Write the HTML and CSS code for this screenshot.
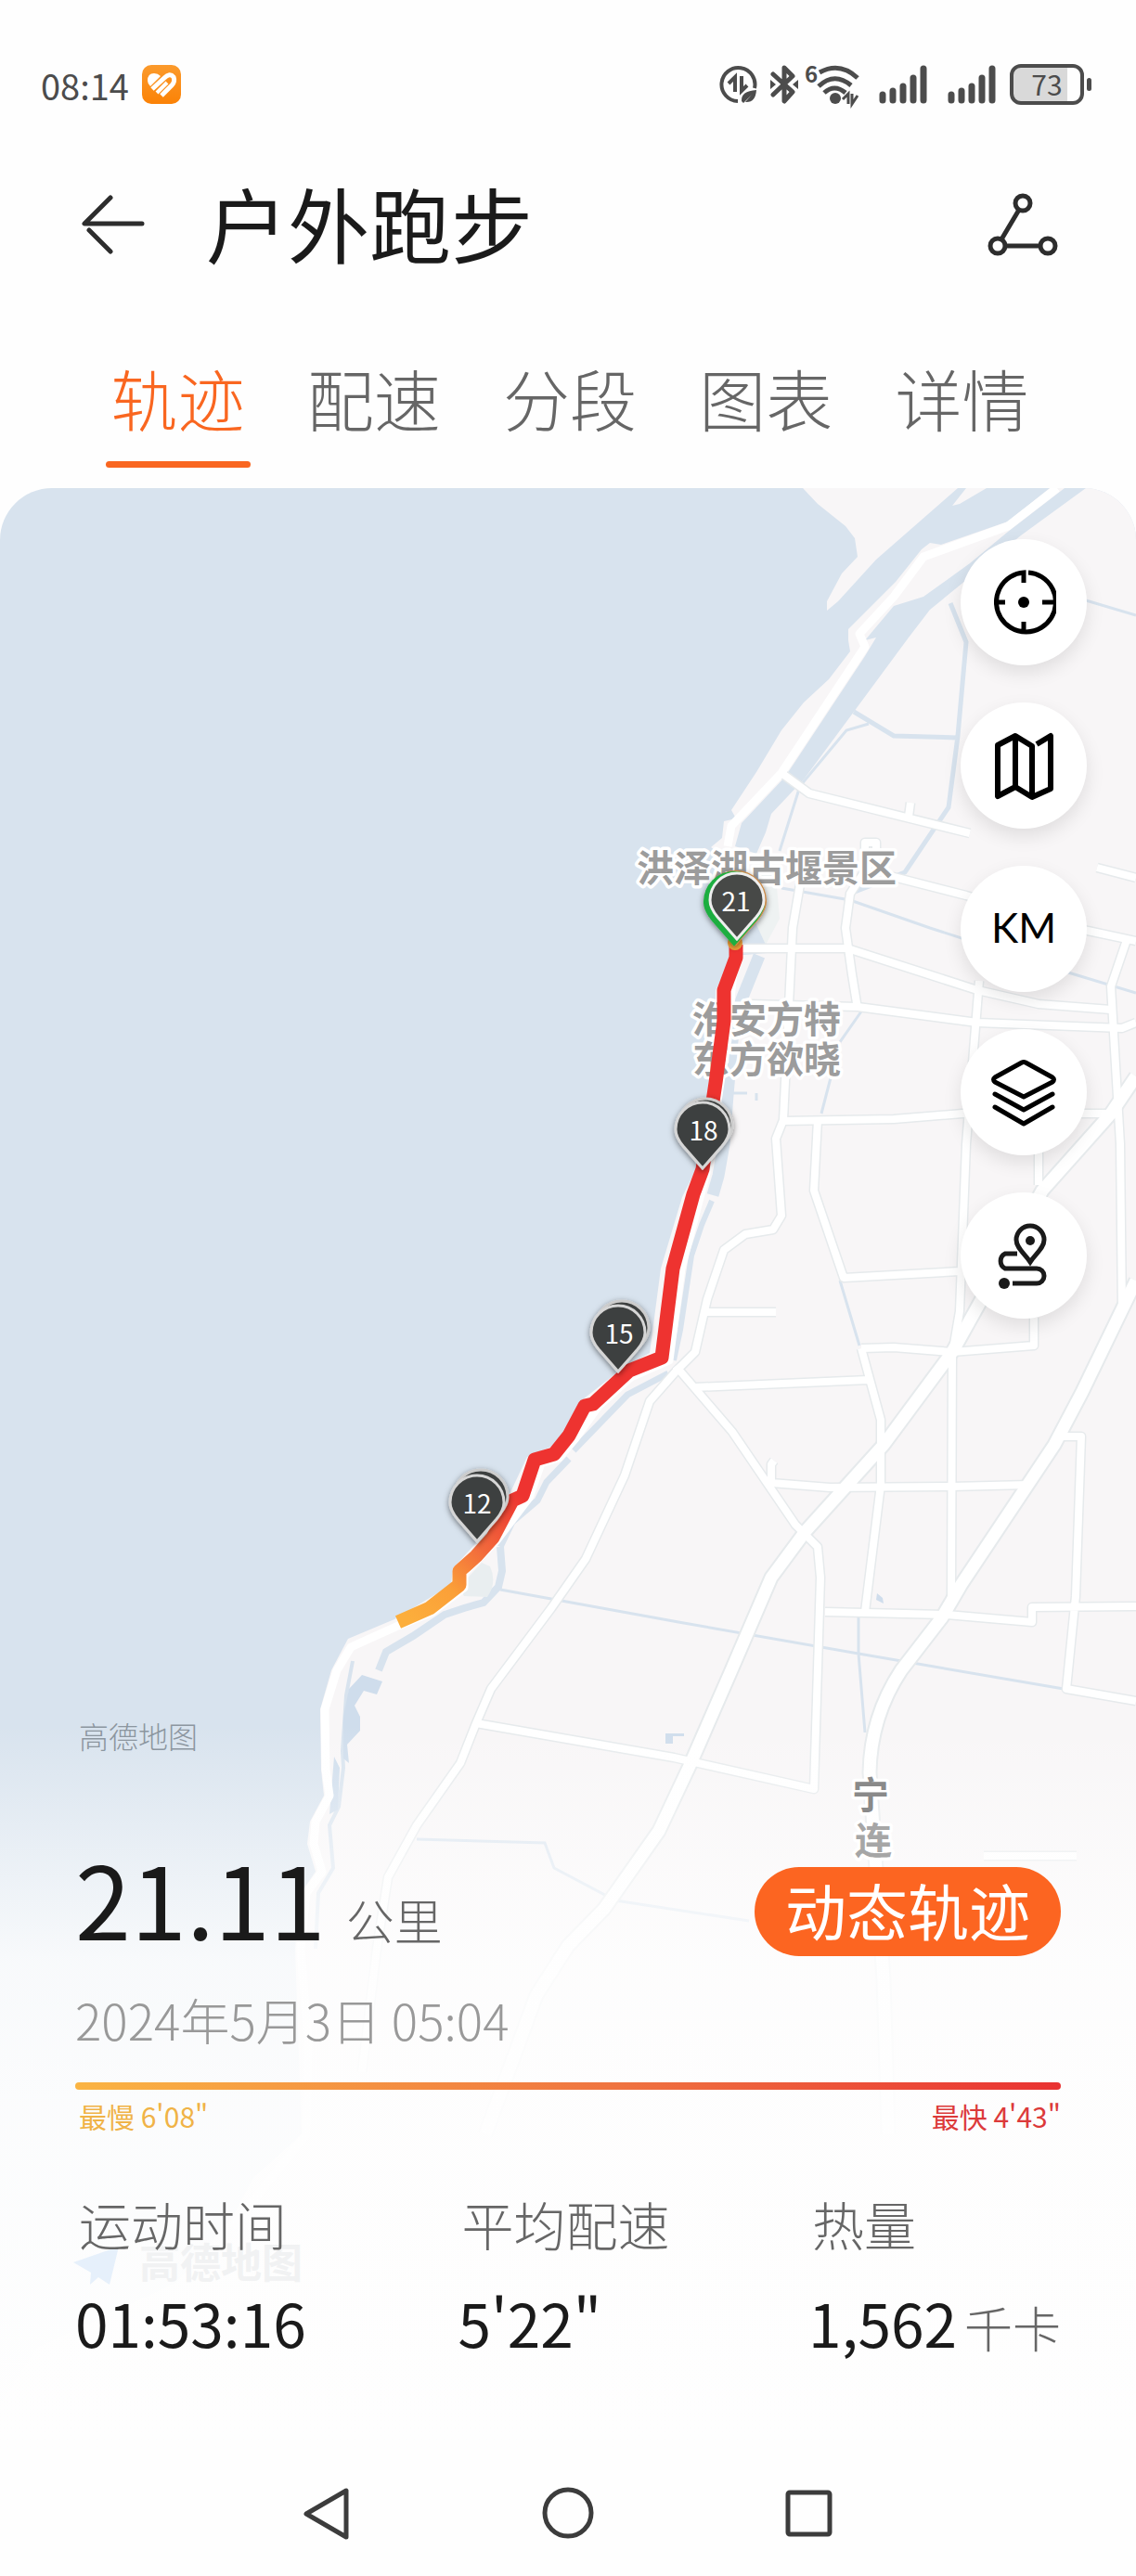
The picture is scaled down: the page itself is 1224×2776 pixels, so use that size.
FILE: index.html
```html
<!DOCTYPE html>
<html lang="zh-CN">
<head>
<meta charset="utf-8">
<meta name="viewport" content="width=device-width, initial-scale=1">
<title>户外跑步</title>
<link rel="stylesheet" href="styles.css">
</head>
<body>
<div class="screen">
  <div class="status">
    <div class="status-side">
      <time class="clock">08:14</time>
      <svg class="app-icon" width="42" height="42" viewBox="0 0 42 42" aria-hidden="true">
        <defs><linearGradient id="appfill" x1="0" y1="0" x2="0" y2="1"><stop offset="0" stop-color="#fb9a2c"/><stop offset="1" stop-color="#fb8206"/></linearGradient></defs>
        <rect width="42" height="42" rx="10" fill="url(#appfill)"/>
        <path d="M6 17Q6 9 13 9Q17 9 20 12L9 23Q6 20 6 17Z" fill="#fff"/>
        <path d="M11 26L24 14Q30 8 34 13Q36 18 32 22L21 33" fill="none" stroke="#fff" stroke-width="5"/>
        <path d="M16 30L27 19" fill="none" stroke="#fff" stroke-width="4"/>
      </svg>
    </div>
    <div class="status-side status-right">
      <svg width="42" height="42" viewBox="0 0 42 42" aria-hidden="true">
        <path d="M21 39A18 18 0 1 1 39 25" fill="none" stroke="#4c4c4c" stroke-width="4"/>
        <path d="M11 20L18 13V29M25 12V28L31 22" fill="none" stroke="#4c4c4c" stroke-width="4"/>
        <path d="M25 39Q24 28 41 27Q40 41 29 40L36 32L27 41Z" fill="#4c4c4c"/>
      </svg>
      <svg class="bt" width="30" height="42" viewBox="0 0 30 42" aria-hidden="true">
        <path d="M3 10L24 29L15 39V3L24 12L3 32" fill="none" stroke="#4c4c4c" stroke-width="5" stroke-linejoin="round" stroke-linecap="round"/>
        <path d="M0 16L6 21L0 26ZM30 16L24 21L30 26Z" fill="#4c4c4c"/>
      </svg>
      <svg class="wifi" width="60" height="44" viewBox="0 0 60 44" aria-hidden="true">
        <text x="-1" y="20" class="wifi-gen">6</text>
        <path d="M15 9Q37 -3 56 15M14 24Q31 8 49 23M20 31Q31 21 43 31" fill="none" stroke="#4c4c4c" stroke-width="5"/>
        <circle cx="32" cy="37" r="6" fill="#4c4c4c"/>
        <path d="M40 38L46 32V43M50 32V43L56 34" fill="none" stroke="#4c4c4c" stroke-width="3"/>
      </svg>
      <svg width="54" height="42" viewBox="0 0 54 42" aria-hidden="true"><path d="M5 32V38M16 28V38M27 23V38M38 14V38M49 4V38" stroke="#4c4c4c" stroke-width="7" stroke-linecap="round"/></svg>
      <svg width="54" height="42" viewBox="0 0 54 42" aria-hidden="true"><path d="M5 32V38M16 28V38M27 23V38M38 14V38M49 4V38" stroke="#4c4c4c" stroke-width="7" stroke-linecap="round"/></svg>
      <div class="battery"><span class="battery-body">73</span><span class="battery-nub"></span></div>
    </div>
  </div>

  <header class="header">
    <button class="icon-btn" type="button" aria-label="返回">
      <svg width="68" height="64" viewBox="0 0 68 64"><path d="M31 3L3 31H65M8 38L31 61" fill="none" stroke="#2d2d2d" stroke-width="5" stroke-linecap="round" stroke-linejoin="round"/></svg>
    </button>
    <h1 class="title">户外跑步</h1>
    <button class="icon-btn" type="button" aria-label="分享">
      <svg width="76" height="68" viewBox="0 0 76 68" fill="none" stroke="#2d2d2d" stroke-width="5"><circle cx="38" cy="11" r="8"/><circle cx="11" cy="57" r="8"/><circle cx="65" cy="57" r="8"/><path d="M34 18L15 50M19 57H57"/></svg>
    </button>
  </header>

  <nav class="tabs" role="tablist">
    <button class="tab active" type="button" role="tab" aria-selected="true">轨迹</button>
    <button class="tab" type="button" role="tab" aria-selected="false">配速</button>
    <button class="tab" type="button" role="tab" aria-selected="false">分段</button>
    <button class="tab" type="button" role="tab" aria-selected="false">图表</button>
    <button class="tab" type="button" role="tab" aria-selected="false">详情</button>
  </nav>

  <main class="track">
    <svg class="map" viewBox="0 526 1224 2116" preserveAspectRatio="xMidYMin slice" role="img" aria-label="跑步轨迹地图">
      <defs>
        <linearGradient id="pace" gradientUnits="userSpaceOnUse" x1="440" y1="1745" x2="560" y2="1610"><stop offset="0" stop-color="#fcae3c"/><stop offset=".3" stop-color="#fba038"/><stop offset=".6" stop-color="#f26a3c"/><stop offset="1" stop-color="#ee3330"/></linearGradient>
        <filter id="soft" x="-40%" y="-40%" width="180%" height="180%"><feDropShadow dx="0" dy="2" stdDeviation="3" flood-opacity=".5"/></filter>
        <path id="drop" d="M0 41L-21 17C-26 11 -29 5 -29 -1A29 29 0 0 1 29 -1C29 5 26 11 21 17Z"/>
        <g id="roads" fill="none" stroke-linejoin="round">
          <g class="minor">
            <path d="M842 833L872 855L1045 898M979 880L981 865M955 943L1041 965L1172 1003L1224 1014M1182 935L1224 946"/>
            <path d="M799 1022H913L1053 1067L1119 1082L1197 1088M807 1082L924 1085L1053 1102L1209 1108L1224 1102"/>
            <path d="M862 953L854 1000L850 1083L844 1207L836 1227L842 1310L833 1325L803 1330L780 1347L762 1400L749 1457L729 1477L700 1510L673 1590L631 1680L594 1733L529 1820L513 1857L496 1900L449 1967L418 2023L406 2100L390 2233"/>
            <path d="M932 924V908H944V920L916 963L911 1000L918 1050L924 1087M844 1208L963 1206L1037 1200H1197"/>
            <path d="M881 1207L877 1283L909 1377L1034 1370M762 1414H836M1055 1057L1051 1107L1041 1233L1034 1413L1026 1460L1025 1720"/>
            <path d="M928 1453L963 1452L1026 1457L1114 1450V1420M1119 1240V1277M1215 1010L1197 1063L1207 1233L1209 1413"/>
            <path d="M728 1472L789 1543L857 1643L881 1667L884 1700L877 1928L726 1894L513 1857M749 1495L936 1487M928 1453L949 1530V1600L932 1737"/>
            <path d="M834 1574L831 1578V1598L894 1603L1025 1602L1109 1600M889 1737L1020 1740L1112 1748V1732L1224 1731M1141 1548H1165L1159 1720L1149 1820L1224 1833M1060 2000H1160"/>
          </g>
          <g class="major">
            <path d="M1224 1160L1197 1200L1123 1283L1026 1457L952 1557L868 1650L831 1700L788 1800L743 1903L710 1973L651 2057L612 2097L578 2150L523 2300"/>
            <path d="M1224 1380L1166 1500L1136 1557L1036 1707L1015 1743L971 1800Q938 1850 937 1910L952 2133L957 2300"/>
          </g>
        </g>
      </defs>
      <rect y="526" width="1224" height="2250" fill="#d8e3ee"/>
      <g fill="#f8f6f7">
        <path d="M865 526L881 543L911 567L921 580L924 600L907 618L891 648V658L903 648L944 603L1032 526ZM1026 545L1041 526H1063L1034 543Z"/>
        <path d="M1131 526L1086 562L1014 587L1002 585L993 592L965 627L914 678V690L916 702L893 732L866 757L842 787L815 832L788 873L793 882L780 885L778 903L766 913L790 930L825 960L826 1027L790 1030L771 1067L768 1167L750 1260L735 1290L712 1367L700 1458L670 1475L628 1508L603 1555L568 1570L550 1608L520 1655L488 1690L486 1708L425 1745L375 1766L357 1800L345 1842L346 1907L349 1935L334 1963L331 1987L340 2017L324 2040L318 2100L325 2300L273 2347L250 2390L190 2460L40 2530L0 2590V2776H1224V526Z"/>
      </g>
      <path d="M1170 526L1100 577L1035 630L1002 657L979 687L920 767L866 840L831 877L825 897L815 920L792 912L799 887L846 837L932 707L944 687L932 690L963 653L995 643L1045 607L1086 573L1147 526Z" fill="#d8e3ee"/>
      <g fill="none" stroke="#d8e3ee">
        <path d="M818 1030L799 1077L790 1110L784 1180L780 1233L774 1267L768 1288" stroke-width="13"/>
        <path d="M767 1294L756 1320L745 1353L733 1433L726 1466" stroke-width="6"/>
        <path d="M720 1480L676 1503L618 1563M613 1572L589 1597L579 1617L552 1640L539 1667" stroke-width="7"/>
        <path d="M539 1667L541 1693L537 1710L521 1727L500 1733L479 1740L445 1763L416 1780L408 1800" stroke-width="8"/>
        <path d="M380 1790L373 1827L369 1887L370 1905L365 1947L355 1967L359 2013L343 2040L340 2100" stroke-width="4"/>
        <path d="M920 767L963 793L1032 795M1024 650L1041 692L1032 793L1022 870L975 940L916 963" stroke-width="5"/>
        <path d="M936 780L912 787L862 847L840 917M842 957L916 970L1002 1000L1151 1048L1224 1070M1170 647L1224 663M928 1090L905 1123L885 1200M905 1380L926 1450M539 1713L731 1748L925 1782L1146 1820M925 1740V1782L932 1867M449 1982L587 1986L597 2013L663 2048L807 2070M784 1178H805M815 1178V1186" stroke-width="3"/>
      </g>
      <path d="M390 1805L412 1812L406 1826L392 1822L382 1838L388 1850V1865L374 1880L376 1900L370 1895V1850L376 1820ZM717 1868H737V1871H725V1879H717ZM945 1717L951 1722L952 1728L944 1724ZM360 1893L366 1905L364 1950L355 1955Z" fill="#cfddec"/>
      <path d="M519 1684L528 1688Q536 1705 525 1721L500 1720L495 1710Z" fill="#e9eef0"/>
      <path d="M814 926L835 932L840 990L825 1018L812 990Z" fill="#eef2f2"/>
      <use href="#roads" class="casing"/>
      <use href="#roads" class="fill"/>
      <path d="M1139 526L1086 567L995 600L963 643L926 683L932 697L842 833L788 890L784 912" class="dam"/>
      <path d="M793 1020L788 1067L784 1120L776 1167L762 1260L734 1367L721 1466L680 1484L645 1515L620 1550L602 1571L583 1577L570 1614L535 1660L500 1695L500 1711L466 1737L429 1752L400 1765L378 1775L363 1800L350 1842L351 1907L355 1935L340 1963L338 1987L347 2017L330 2040L324 2100L332 2200L330 2300L290 2350L250 2400" class="dam"/>
      <g class="place">
        <text x="686" y="950">洪泽湖古堰景区</text>
        <text x="746" y="1113">淮安方特</text>
        <text x="746" y="1156">东方欲晓</text>
      </g>
      <path d="M793 1018V1032L780 1067V1100L771 1167L757 1260L747 1287L725 1367L713 1463L678 1477L639 1513L630 1515L613 1547L597 1567L576 1573L563 1612L552 1617L531 1657L513 1677L495 1693V1708L463 1733L429 1748" fill="none" stroke="url(#pace)" stroke-width="15" stroke-linejoin="round"/>
      <circle cx="792" cy="1016" r="8" fill="#f5a33b"/>
      <g stroke-width="3">
        <g transform="translate(793 972)" filter="url(#soft)"><use href="#drop" transform="scale(1.14)" fill="#c98a4a"/><use href="#drop" transform="translate(-2 1) scale(1.14)" fill="#1fae40"/><use href="#drop" transform="translate(1 -1)" fill="#464a47" stroke="#eee"/></g>
        <g transform="translate(757 1218)" filter="url(#soft)"><use href="#drop" transform="translate(3 -4)" fill="#3e403f" stroke="#ccc"/><use href="#drop" fill="#3e403f" stroke="#d6d6d6"/></g>
        <g transform="translate(666 1437)" filter="url(#soft)"><use href="#drop" transform="translate(4 -5)" fill="#3e403f" stroke="#ccc"/><use href="#drop" fill="#3e403f" stroke="#d6d6d6"/></g>
        <g transform="translate(514 1620)" filter="url(#soft)"><use href="#drop" transform="translate(4 -6)" fill="#3e403f" stroke="#ccc"/><use href="#drop" fill="#3e403f" stroke="#d6d6d6"/></g>
      </g>
      <g class="pin-text">
        <text x="793" y="982">21</text>
        <text x="758" y="1229">18</text>
        <text x="667" y="1448">15</text>
        <text x="514" y="1631">12</text>
      </g>
    </svg>
    <div class="fade"></div>
    <svg class="map" viewBox="0 526 1224 2116" preserveAspectRatio="xMidYMin slice" aria-hidden="true">
      <g class="place">
        <text x="918" y="1949" class="road-near">宁</text>
        <text x="921" y="1998" class="road-far">连</text>
      </g>
      <path d="M79 2438L128 2421L118 2462L106 2454L97 2462L98 2449Z" fill="#e6f0fb"/>
      <text x="150" y="2455" class="watermark">高德地图</text>
    </svg>

    <div class="content">
      <div class="tools">
        <button class="tool" type="button" aria-label="定位"><svg width="70" height="70" viewBox="0 0 70 70" fill="none" stroke="#000" stroke-width="5"><path d="M35 14V3A32 32 0 1 0 40 3M35 56V67M3 35H15M55 35H67"/><circle cx="35" cy="35" r="6" fill="#000" stroke="none"/></svg></button>
        <button class="tool" type="button" aria-label="地图类型"><svg width="70" height="76" viewBox="0 0 70 76" fill="none" stroke="#000" stroke-width="6" stroke-linejoin="round"><path d="M49 15L64 6V63L44 72L26 61L7 71V16L26 6L44 17V72M26 6V61"/></svg></button>
        <button class="tool km" type="button">KM</button>
        <button class="tool" type="button" aria-label="图层"><svg width="72" height="74" viewBox="0 0 72 74" fill="none" stroke="#000" stroke-width="5" stroke-linejoin="round" stroke-linecap="round"><path d="M34 5Q36 4 38 5L67 21Q70 23 67 26L36 42L5 26Q2 23 5 21ZM5 39L36 56L67 39M5 53L36 71L67 53"/></svg></button>
        <button class="tool" type="button" aria-label="轨迹点"><svg width="62" height="72" viewBox="0 0 62 72" fill="none" stroke="#1a1a1a" stroke-width="5"><path d="M38 43C32 34 23 28 23 19A15 15 0 0 1 53 19C53 28 44 34 38 43ZM24 34H11A9 9 0 0 0 11 50H45A8 8 0 0 1 45 66H19"/><circle cx="38" cy="20" r="5" fill="#1a1a1a" stroke="none"/><circle cx="10" cy="66" r="6" fill="#1a1a1a" stroke="none"/></svg></button>
      </div>

      <p class="provider">高德地图</p>

      <section class="summary">
        <div class="headline">
          <p class="distance"><span>21.11</span><span class="unit">公里</span></p>
          <button class="replay" type="button">动态轨迹</button>
        </div>
        <p class="date">2024年5月3日 05:04</p>
        <div class="pace-bar"></div>
        <div class="pace-ends"><span class="slow">最慢 6'08"</span><span class="fast">最快 4'43"</span></div>
        <dl class="stats">
          <div><dt>运动时间</dt><dd>01:53:16</dd></div>
          <div><dt>平均配速</dt><dd>5'22"</dd></div>
          <div><dt>热量</dt><dd><span>1,562</span><span class="unit">千卡</span></dd></div>
        </dl>
      </section>
    </div>
  </main>

  <footer class="sysnav">
    <button class="icon-btn" type="button" aria-label="后退"><svg width="56" height="60" viewBox="0 0 56 60"><path d="M49 5V55L6 30Z" fill="none" stroke="#3c3c3c" stroke-width="5" stroke-linejoin="round"/></svg></button>
    <button class="icon-btn" type="button" aria-label="主页"><svg width="56" height="60" viewBox="0 0 56 60"><circle cx="28" cy="29" r="25" fill="none" stroke="#3c3c3c" stroke-width="5"/></svg></button>
    <button class="icon-btn" type="button" aria-label="最近任务"><svg width="56" height="60" viewBox="0 0 56 60"><rect x="5" y="7" width="45" height="45" rx="2" fill="none" stroke="#3c3c3c" stroke-width="5"/></svg></button>
  </footer>
</div>
</body>
</html>
```
FILE: styles.css
```css
* { box-sizing: border-box; }

body {
  margin: 0;
  background: #fefefe;
  color: #1a1a1a;
  font-family: "Noto Sans CJK SC", sans-serif;
  font-weight: 300;
}

button {
  padding: 0;
  border: 0;
  background: none;
  color: inherit;
  font: inherit;
}

p, h1, dl, dd { margin: 0; }
svg { display: block; flex: none; }

.screen {
  display: flex;
  flex-direction: column;
  min-height: 100vh;
}

/* status bar */
.status {
  display: flex;
  align-items: center;
  justify-content: space-between;
  height: 182px;
  padding: 0 48px 0 44px;
  color: #4c4c4c;
}
.status-side { display: flex; align-items: center; gap: 14px; }
.status-right { gap: 20px; }
.clock { font-size: 38px; font-weight: 400; }
.bt { margin-left: -6px; }
.wifi { margin: 0 -2px 0 -12px; overflow: visible; }
.wifi-gen { font-size: 24px; font-weight: 700; fill: #4c4c4c; }
.battery { display: flex; align-items: center; gap: 3px; margin-left: -6px; }
.battery-body {
  width: 80px;
  height: 44px;
  border: 4px solid #4c4c4c;
  border-radius: 12px;
  background: linear-gradient(90deg, #d9d9d9 80%, #fefefe 80%);
  font-size: 30px;
  font-weight: 400;
  line-height: 34px;
  text-align: center;
}
.battery-nub { width: 5px; height: 14px; border-radius: 3px; background: #4c4c4c; }

/* page header */
.header {
  display: flex;
  align-items: center;
  height: 126px;
  padding: 0 84px 6px 88px;
}
.title {
  flex: 1;
  padding: 0 0 6px 66px;
  font-size: 88px;
  font-weight: 400;
  line-height: 114px;
}

/* tabs */
.tabs {
  display: grid;
  grid-template-columns: repeat(5, 1fr);
  padding: 66px 82px 22px 86px;
}
.tab {
  justify-self: center;
  width: 156px;
  color: #666;
  font-size: 72px;
  line-height: 108px;
  white-space: nowrap;
}
.tab::after {
  content: "";
  display: block;
  height: 7px;
  margin-top: 15px;
  border-radius: 4px;
}
.tab.active { color: #f96620; }
.tab.active::after { background: #f96620; }

/* map with the summary laid over it */
.track {
  position: relative;
  flex: 1;
  overflow: hidden;
  border-radius: 56px 56px 0 0;
}
.map {
  position: absolute;
  inset: 0;
  width: 100%;
  height: 100%;
}
.fade {
  position: absolute;
  inset: 0;
  background: linear-gradient(rgba(254, 254, 254, 0) 63%, rgba(254, 254, 254, .5) 70%, rgba(254, 254, 254, .84) 75%, rgba(254, 254, 254, .92) 82%, #fefefe 100%);
}
.minor { stroke-width: var(--minor); }
.major { stroke-width: var(--major); }
.casing { --minor: 11px; --major: 17px; stroke: #e6eaec; }
.fill { --minor: 8px; --major: 13px; stroke: #fff; }
.dam { fill: none; stroke: #fff; stroke-width: 9px; stroke-linejoin: round; }
.place {
  fill: #9c9c9c;
  stroke: #fff;
  stroke-width: 7px;
  stroke-linejoin: round;
  paint-order: stroke;
  font-size: 40px;
  font-weight: 700;
}
.road-near { fill: #8a8a8a; }
.road-far { fill: #a6a6a6; }
.pin-text {
  fill: #fff;
  font-size: 28px;
  font-weight: 400;
  text-anchor: middle;
}
.watermark {
  fill: #f1f2f3;
  font-size: 44px;
  font-weight: 700;
}

.content {
  position: relative;
  display: flex;
  flex-direction: column;
  padding: 55px 81px 0;
}
.tools {
  align-self: flex-end;
  display: flex;
  flex-direction: column;
  gap: 40px;
  margin-right: -28px;
}
.tool {
  display: flex;
  align-items: center;
  justify-content: center;
  width: 136px;
  height: 136px;
  border-radius: 50%;
  background: #fff;
  box-shadow: 0 8px 20px rgba(0, 0, 0, .1);
}
.km {
  padding-bottom: 4px;
  color: #000;
  font-family: Lato, sans-serif;
  font-size: 44px;
  font-weight: 400;
}

.provider {
  margin-top: 425px;
  padding-left: 4px;
  color: #8c969f;
  font-size: 32px;
  line-height: 48px;
}

.headline {
  display: flex;
  align-items: flex-end;
  justify-content: space-between;
  margin-top: 86px;
}
.distance {
  display: flex;
  align-items: baseline;
  gap: 22px;
  font-size: 108px;
  font-weight: 400;
  line-height: 128px;
  white-space: nowrap;
}
.unit {
  color: #666;
  font-size: 52px;
  font-weight: 300;
  line-height: 52px;
}
.replay {
  width: 330px;
  height: 96px;
  padding-bottom: 6px;
  border-radius: 48px;
  background: #fc6521;
  color: #fff;
  font-size: 66px;
  font-weight: 400;
  line-height: 90px;
}
.date {
  margin-top: 28px;
  color: #999;
  font-size: 53px;
  line-height: 80px;
}
.pace-bar {
  height: 8px;
  margin-top: 28px;
  border-radius: 4px;
  background: linear-gradient(90deg, #fab443, #ef7340 55%, #e93232);
}
.pace-ends {
  display: flex;
  justify-content: space-between;
  margin-top: 4px;
  padding-left: 4px;
  font-size: 30px;
  font-weight: 400;
  line-height: 48px;
}
.slow { color: #f0b347; }
.fast { color: #dc3a3a; }

.stats {
  display: grid;
  grid-template-columns: 415fr 380fr 267fr;
  margin-top: 52px;
  white-space: nowrap;
}
.stats dt { padding-left: 4px; color: #666; font-size: 56px; line-height: 80px; }
.stats dd {
  display: flex;
  align-items: baseline;
  gap: 8px;
  margin-top: 16px;
  font-size: 64px;
  font-weight: 400;
  line-height: 100px;
}

/* system navigation */
.sysnav {
  display: flex;
  align-items: center;
  justify-content: center;
  gap: 204px;
  height: 134px;
}
```
